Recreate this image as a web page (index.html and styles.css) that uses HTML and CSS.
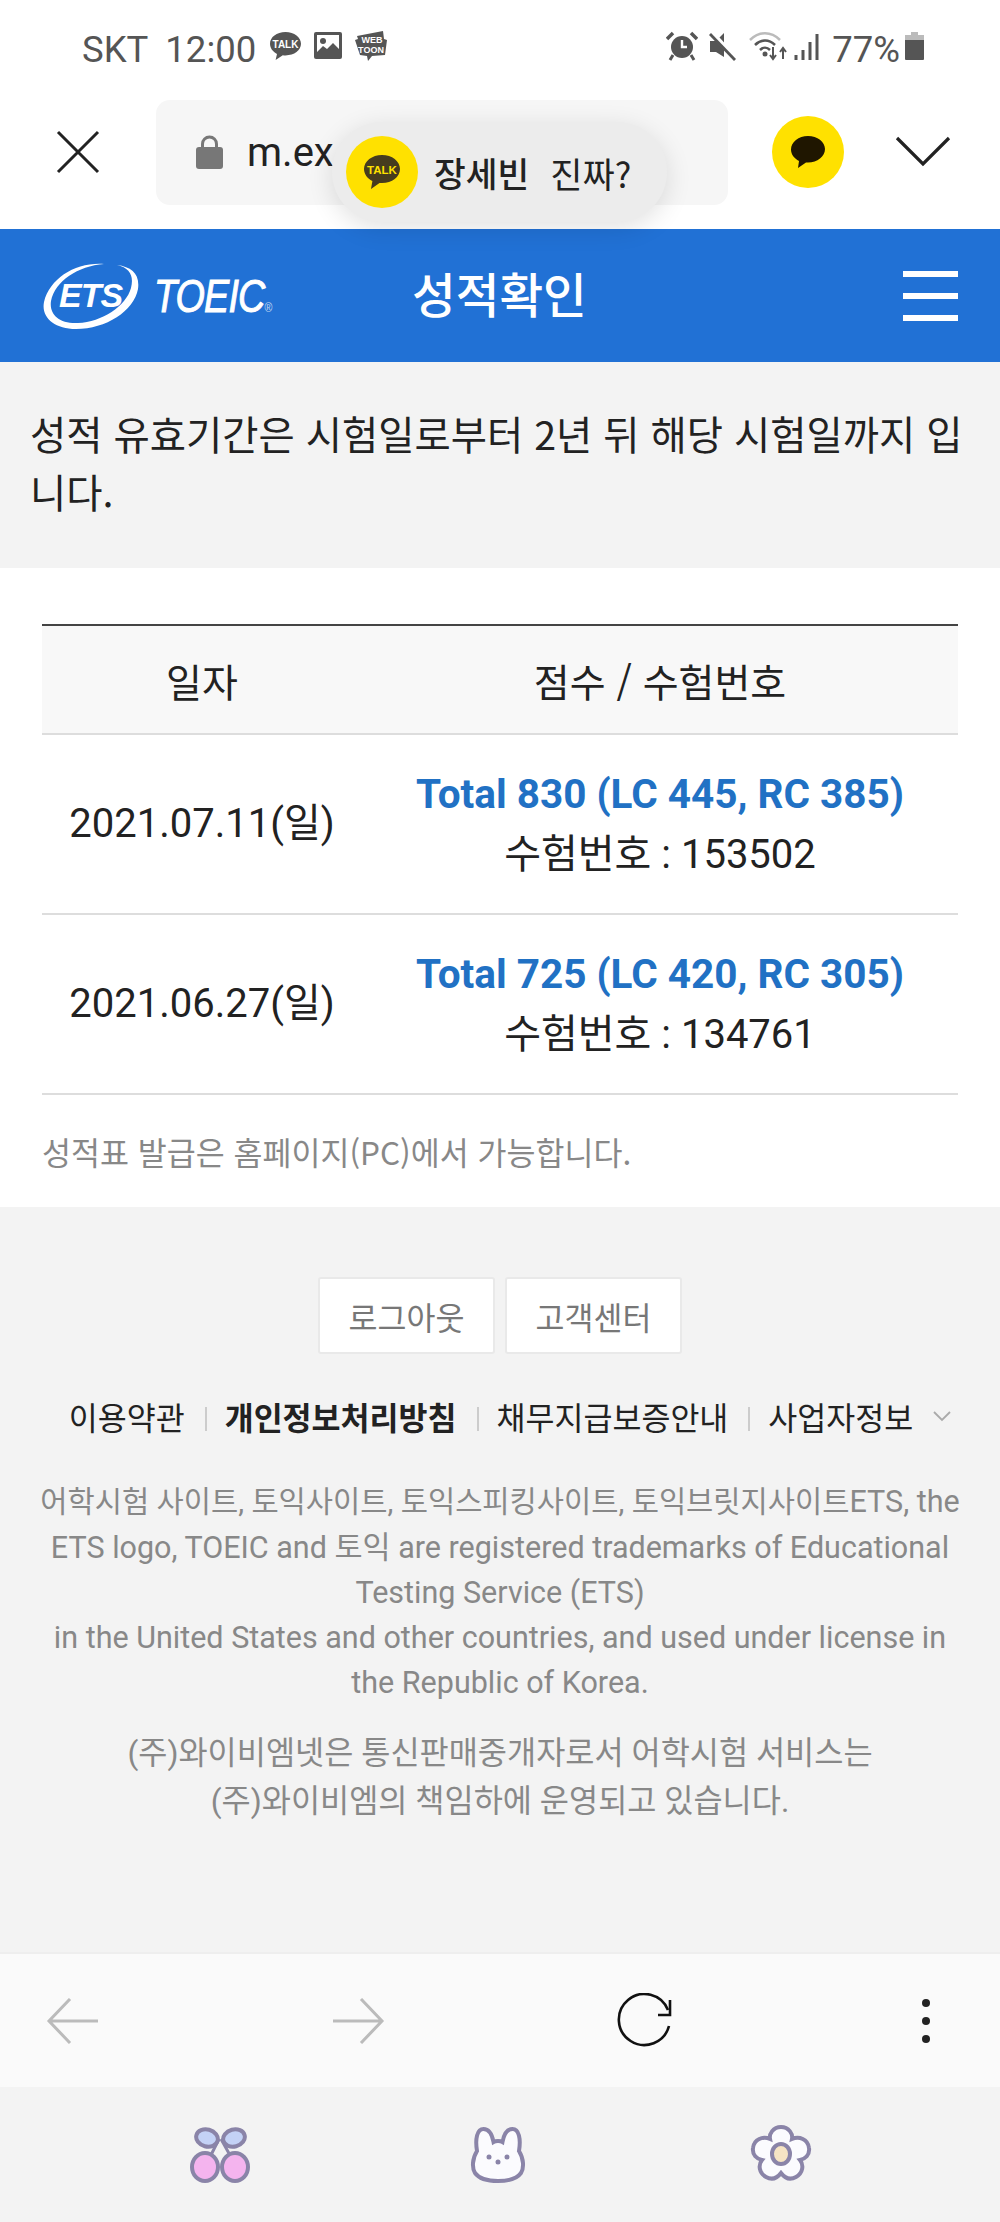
FILE: index.html
```html
<!DOCTYPE html>
<html lang="ko">
  <head>
    <meta charset="UTF-8" />
    <meta name="viewport" content="width=device-width, initial-scale=1.0" />
    <title>성적확인</title>
    <link rel="stylesheet" href="styles.css">
  </head>
  <body>
    <div class="statusbar">
      <div class="status-left">
        <span class="carrier">SKT</span>
        <span class="clock">12:00</span>
        <svg class="ico-talk" width="33" height="30" viewBox="0 0 33 30">
          <path d="M16.5 1C7.7 1 1 6.100 1 12.800c0 4.300 2.800 8 7 10.100L6.600 29l7.200-4.800c.9.100 1.800.2 2.700.2 8.800 0 15.500-5.100 15.500-11.600S25.300 1 16.500 1z" fill="#555"/>
          <text x="16.500" y="17" class="talk-text">TALK</text>
        </svg>
        <svg class="ico-pic" width="28" height="28" viewBox="0 0 28 28">
          <rect width="28" height="27" rx="2" fill="#555"/>
          <rect x="3" y="3" width="22" height="20" fill="#fff"/>
          <circle cx="9" cy="9" r="3" fill="#555"/>
          <path d="M3 20l6-6 4 3 6-6 6 6v6H3z" fill="#555"/>
        </svg>
        <svg class="ico-webtoon" width="34" height="32" viewBox="0 0 34 32">
          <path d="M3 6l26-5 1 8 3 1-2 15-13 1-4 5-1-5-7-1-5-15 3-1z" fill="#555"/>
          <text x="18" y="13" class="toon-text">WEB</text>
          <text x="17" y="23" class="toon-text">TOON</text>
        </svg>
      </div>
      <div class="status-right">
        <svg width="32" height="30" viewBox="0 0 32 30">
          <circle cx="16" cy="16" r="11" fill="#555"/>
          <path d="M16 9v7h5" fill="none" stroke="#fff" stroke-width="2.400"/>
          <path d="M1 8l6-6M31 8l-6-6" stroke="#555" stroke-width="3.500"/>
          <path d="M7 24l-3 5M25 24l3 5" stroke="#555" stroke-width="3"/>
        </svg>
        <svg class="ico-mute" width="28" height="30" viewBox="0 0 28 30">
          <path d="M1 10h6l8-8v24l-8-5H1z" fill="#555"/>
          <path d="M2 1l24 26" stroke="#fff" stroke-width="5"/>
          <path d="M1 3l25 26" stroke="#555" stroke-width="2.800"/>
        </svg>
        <svg class="ico-wifi" width="38" height="30" viewBox="0 0 38 30">
          <path d="M1 9c9-9 21-9 30 0" fill="none" stroke="#bbb" stroke-width="2.500"/>
          <path d="M6 14c6-6 14-6 20 0M11 19c3-3 7-3 10 0" fill="none" stroke="#555" stroke-width="2.500"/>
          <circle cx="16" cy="23" r="2.500" fill="#555"/>
          <path d="M24 16v11M21 24l3 4 3-4M34 28V18M31 21l3-4 3 4" fill="none" stroke="#555" stroke-width="2"/>
        </svg>
        <svg class="ico-signal" width="26" height="30" viewBox="0 0 26 30">
          <path d="M2 24v5M9 19v10M16 11v18M23 3v26" stroke="#555" stroke-width="3"/>
        </svg>
        <span class="battery-text">77%</span>
        <svg class="ico-batt" width="19" height="30" viewBox="0 0 19 30">
          <path d="M6 1h7v3h6v5H0V4h6z" fill="#bbb"/>
          <path d="M0 9h19v19a1 1 0 0 1-1 1H1a1 1 0 0 1-1-1z" fill="#555"/>
        </svg>
      </div>
    </div>

    <div class="browserbar">
      <svg class="ico-close" width="44" height="44" viewBox="0 0 44 44">
        <path d="M2 2l40 40M42 2L2 42" stroke="#222" stroke-width="3"/>
      </svg>
      <div class="urlbox">
        <svg width="27" height="34" viewBox="0 0 27 34">
          <path d="M6.500 14V9a7 7 0 0 1 14 0v5" fill="none" stroke="#777" stroke-width="3"/>
          <rect y="12" width="27" height="22" rx="3" fill="#777"/>
        </svg>
        <span class="urltext">m.ex</span>
      </div>
      <div class="kakao-btn">
        <svg width="34" height="34" viewBox="0 0 34 34">
          <path d="M17 1C7.600 1 0 7 0 14.500c0 5 3.300 9 8 11.500l-1 7 8-5.500c.7.100 1.300.1 2 .1 9.400 0 17-6 17-13.500S26.400 1 17 1z" fill="#1f1600"/>
        </svg>
      </div>
      <svg class="ico-chevron" width="56" height="32" viewBox="0 0 56 32">
        <path d="M2 2l26 26L54 2" fill="none" stroke="#222" stroke-width="3.200"/>
      </svg>
    </div>

    <div class="toast">
      <div class="toast-badge">
        <svg width="38" height="36" viewBox="0 0 38 36">
          <path d="M19 1C9 1 1 7.300 1 15c0 5 3.300 9.400 8.400 12L8 35l8.500-6c.8.100 1.700.1 2.500.1 10 0 18-6.300 18-14.100S29 1 19 1z" fill="#463c1e"/>
          <text x="19" y="20" class="toast-talk">TALK</text>
        </svg>
      </div>
      <span class="toast-name">장세빈</span>
      <span class="toast-msg">진짜?</span>
    </div>

    <header class="topbar">
      <div class="logo">
        <svg class="logo-ring" width="100" height="72" viewBox="0 0 100 72">
          <path d="M62 4C34 2 8 18 2 42c-3 15 10 27 32 27 30 0 58-18 62-40C98 14 90 7 75 5c13 3 17 11 14 23C84 46 60 62 36 63 17 64 7 54 9 41 13 21 36 6 62 4z" fill="#fff"/>
        </svg>
        <span class="logo-ets">ETS</span>
        <span class="logo-toeic">TOEIC<small>®</small></span>
      </div>
      <h1 class="page-title">성적확인</h1>
      <div class="hamburger"><i></i><i></i><i></i></div>
    </header>

    <p class="notice">성적 유효기간은 시험일로부터 2년 뒤 해당 시험일까지 입니다.</p>

    <main class="content">
      <table class="score-table">
        <thead>
          <tr><th class="col-date">일자</th><th>점수 / 수험번호</th></tr>
        </thead>
        <tbody>
          <tr>
            <td>2021.07.11(일)</td>
            <td><a class="score">Total 830 (LC 445, RC 385)</a><br />수험번호 : 153502</td>
          </tr>
          <tr>
            <td>2021.06.27(일)</td>
            <td><a class="score">Total 725 (LC 420, RC 305)</a><br />수험번호 : 134761</td>
          </tr>
        </tbody>
      </table>
      <p class="table-note">성적표 발급은 홈페이지(PC)에서 가능합니다.</p>
    </main>

    <footer class="footer">
      <div class="footer-buttons">
        <button>로그아웃</button>
        <button>고객센터</button>
      </div>
      <ul class="footer-links">
        <li>이용약관</li>
        <li class="strong">개인정보처리방침</li>
        <li>채무지급보증안내</li>
        <li class="last">사업자정보<svg class="ico-down" width="18" height="11" viewBox="0 0 18 11"><path d="M1 1l8 8 8-8" fill="none" stroke="#aaa" stroke-width="1.800"/></svg></li>
      </ul>
      <p class="legal"><span class="ko-tight">어학시험 사이트, 토익사이트, 토익스피킹사이트, 토익브릿지사이트</span>ETS, the<br />ETS logo, TOEIC and 토익 are registered trademarks of Educational<br />Testing Service (ETS)<br />in the United States and other countries, and used under license in<br />the Republic of Korea.</p>
      <p class="legal legal-ko">(주)와이비엠넷은 통신판매중개자로서 어학시험 서비스는<br />(주)와이비엠의 책임하에 운영되고 있습니다.</p>
    </footer>

    <div class="toolbar">
      <svg class="tool-back" width="54" height="46" viewBox="0 0 54 46"><path d="M52 23H3M24 1L3 23l21 22" fill="none" stroke="#bbb" stroke-width="3"/></svg>
      <svg class="tool-next" width="54" height="46" viewBox="0 0 54 46"><path d="M2 23h49M30 1l21 22-21 22" fill="none" stroke="#bbb" stroke-width="3"/></svg>
      <svg class="tool-reload" width="56" height="56" viewBox="0 0 56 56"><path d="M52 33A25.500 25.500 0 1 1 51 17" fill="none" stroke="#111" stroke-width="2.600"/><path d="M53 7V22H41" fill="none" stroke="#111" stroke-width="2.600"/></svg>
      <svg class="tool-more" width="10" height="46" viewBox="0 0 10 46"><circle cx="5" cy="5" r="4" fill="#222"/><circle cx="5" cy="23" r="4" fill="#222"/><circle cx="5" cy="41" r="4" fill="#222"/></svg>
    </div>

    <nav class="navbar">
      <svg width="60" height="56" viewBox="0 0 60 56">
        <path d="M29 12L20 30M31 12l10 18" stroke="#8a84a8" stroke-width="3"/>
        <ellipse cx="17" cy="11" rx="11" ry="8.500" fill="#c4d2f6" stroke="#8a84a8" stroke-width="4" transform="rotate(15 17 11)"/>
        <ellipse cx="44" cy="11" rx="11" ry="8.500" fill="#c4d2f6" stroke="#8a84a8" stroke-width="4" transform="rotate(-15 44 11)"/>
        <ellipse cx="15" cy="40" rx="13" ry="14" fill="#f4b4ee" stroke="#8a84a8" stroke-width="4"/>
        <ellipse cx="45" cy="40" rx="13" ry="14" fill="#f4b4ee" stroke="#8a84a8" stroke-width="4"/>
      </svg>
      <svg width="60" height="56" viewBox="0 0 60 56">
        <path d="M28 14C26.500 14 25 14 23.500 15C22 7 19 2 13.500 2C7 2 5 12 7 24C2 32 2 41 5 46C10 53 19 54 28 54C37 54 46 53 51 46C54 41 54 32 49 24C51 12 49 2 42.500 2C37 2 34 7 32.500 15C31 14 29.500 14 28 14Z" fill="#fbfbfe" stroke="#8a84a8" stroke-width="4"/>
        <circle cx="19" cy="30" r="2.500" fill="#8a84a8"/><circle cx="37" cy="30" r="2.500" fill="#8a84a8"/><circle cx="28" cy="35" r="2.500" fill="#8a84a8"/>
      </svg>
      <svg width="62" height="60" viewBox="0 0 62 60">
        <path d="M31 2c8 0 12 7 11 12 7-3 16 0 17 9 1 7-4 11-9 12 4 5 3 13-4 17-7 4-12 0-15-4-3 4-8 8-15 4-7-4-8-12-4-17-5-1-10-5-9-12 1-9 10-12 17-9-1-5 3-12 11-12z" fill="#fbfbfe" stroke="#8a84a8" stroke-width="4"/>
        <ellipse cx="31" cy="29" rx="9" ry="10" fill="#f6e4c4" stroke="#8a84a8" stroke-width="4"/>
      </svg>
    </nav>
  </body>
</html>
```

FILE: styles.css
```css
* {
  box-sizing: border-box;
}
html,
body {
  margin: 0;
  padding: 0;
}
body {
  width: 1000px;
  height: 2222px;
  overflow: hidden;
  position: relative;
  background: #fff;
  font-family: "Noto Sans CJK KR", "Noto Sans", sans-serif;
  color: #222;
}
svg {
  display: block;
  flex: none;
}

/* phone status bar */
.statusbar {
  height: 92px;
  display: flex;
  justify-content: space-between;
  align-items: center;
  padding: 0 76px 0 82px;
  font-family: Roboto, sans-serif;
  font-size: 36.500px;
  color: #555;
}
.status-left,
.status-right {
  display: flex;
  align-items: center;
}
.carrier {
  margin-right: 17px;
  padding-top: 6px;
}
.clock {
  margin-right: 13px;
  padding-top: 6px;
}
.ico-pic {
  margin-left: 12px;
}
.ico-webtoon {
  margin-left: 12px;
}
.talk-text,
.toast-talk {
  font-family: "Liberation Sans", sans-serif;
  font-weight: 700;
  text-anchor: middle;
}
.talk-text {
  font-size: 10px;
  fill: #fff;
}
.toon-text {
  font-family: "Liberation Sans", sans-serif;
  font-weight: 700;
  font-size: 9px;
  text-anchor: middle;
  fill: #fff;
}
.toast-talk {
  font-size: 11.500px;
  fill: #ffe100;
}
.status-right {
  gap: 11px;
}
.ico-wifi {
  margin-left: 1px;
}
.ico-signal {
  margin-left: -4px;
}
.battery-text {
  margin-left: 1px;
  margin-right: -6px;
  padding-top: 6px;
}

/* browser bar */
.browserbar {
  height: 137px;
  display: flex;
  align-items: center;
  padding: 0 28px 17px 56px;
}
.urlbox {
  width: 572px;
  height: 105px;
  margin-left: 56px;
  padding-left: 40px;
  display: flex;
  align-items: center;
  gap: 24px;
  background: #f6f6f6;
  border-radius: 14px;
}
.urltext {
  font-family: Roboto, sans-serif;
  font-size: 40px;
  color: #222;
}
.kakao-btn {
  width: 72px;
  height: 72px;
  margin-left: 44px;
  border-radius: 50%;
  background: #ffe100;
  display: flex;
  align-items: center;
  justify-content: center;
}
.ico-chevron {
  margin-left: 51px;
}

/* kakao popup */
.toast {
  position: absolute;
  left: 332px;
  top: 122px;
  width: 335px;
  height: 100px;
  padding-left: 14px;
  display: flex;
  align-items: center;
  background: #ececec;
  border-radius: 50px;
  box-shadow: 0 6px 26px rgba(0, 0, 0, 0.12);
  z-index: 2;
}
.toast-badge {
  width: 72px;
  height: 72px;
  border-radius: 50%;
  background: #ffe100;
  display: flex;
  align-items: center;
  justify-content: center;
}
.toast-name {
  margin-left: 16px;
  font-size: 34.500px;
  font-weight: 500;
}
.toast-msg {
  margin-left: 21px;
  font-size: 35px;
}

/* blue header */
.topbar {
  height: 133px;
  background: #2171d5;
  color: #fff;
  display: flex;
  align-items: center;
  position: relative;
  padding: 0 42px 0 42px;
}
.logo {
  width: 230px;
  height: 72px;
  display: flex;
  align-items: center;
  position: relative;
  font-family: "Liberation Sans", sans-serif;
  font-style: italic;
  font-weight: 700;
}
.logo-ring {
  position: absolute;
  left: 0;
  top: 0;
}
.logo-ets {
  margin-left: 17px;
  font-size: 34px;
  letter-spacing: -1px;
}
.logo-toeic {
  margin-left: 32px;
  font-size: 46px;
  font-weight: 400;
  letter-spacing: -1px;
  -webkit-text-stroke: 1px #fff;
  transform: scaleX(0.82);
  transform-origin: left center;
}
.logo-toeic small {
  font-size: 13px;
  font-style: normal;
  -webkit-text-stroke: 0;
  opacity: 0.7;
}
.page-title {
  margin: 0 0 5px 140px;
  font-size: 47.500px;
  font-weight: 500;
  line-height: 1;
}
.hamburger {
  margin-left: auto;
  display: flex;
  flex-direction: column;
  gap: 16px;
}
.hamburger i {
  display: block;
  width: 55px;
  height: 6px;
  background: #fff;
}

/* notice */
.notice {
  margin: 0;
  height: 206px;
  padding: 42px 28px 0 30px;
  background: #f3f3f3;
  font-size: 39.400px;
  line-height: 58px;
  color: #222;
}

/* score table */
.content {
  height: 639px;
  padding: 56px 42px 0;
}
.score-table {
  width: 916px;
  border-collapse: collapse;
  border-top: 2px solid #444;
  font-size: 40px;
  text-align: center;
  table-layout: fixed;
}
.score-table th {
  height: 109px;
  background: #f8f8f8;
  border-bottom: 2px solid #ddd;
  font-size: 39px;
  font-weight: 400;
}
.col-date {
  width: 320px;
}
.score-table td {
  height: 180px;
  border-bottom: 2px solid #ddd;
  line-height: 60px;
  font-family: Roboto, "Noto Sans CJK KR", sans-serif;
}
.score {
  color: #2171c4;
  font-weight: 700;
  font-size: 40.500px;
}
.table-note {
  margin: 34px 0 0;
  font-size: 31.500px;
  line-height: 44px;
  color: #888;
}

/* footer */
.footer {
  height: 745px;
  padding-top: 70px;
  background: #f3f3f3;
  text-align: center;
}
.footer-buttons {
  display: flex;
  justify-content: center;
  gap: 10px;
}
.footer-buttons button {
  width: 177px;
  height: 77px;
  padding: 0;
  background: #fff;
  border: 2px solid #e9e9e9;
  border-radius: 3px;
  font-family: inherit;
  font-size: 31.500px;
  color: #777;
}
.footer-links {
  margin: 39px 0 0;
  padding: 0;
  list-style: none;
  display: flex;
  justify-content: center;
  font-size: 31.500px;
  line-height: 46px;
  color: #222;
}
.footer-links li {
  display: flex;
  align-items: center;
  padding: 0 20px;
  position: relative;
}
.footer-links li + li::before {
  content: "";
  position: absolute;
  left: 0;
  top: 14px;
  width: 2px;
  height: 24px;
  background: #ccc;
}
.footer-links .last {
  padding-right: 0;
}
.footer-links .strong {
  font-weight: 700;
}
.ico-down {
  margin-left: 20px;
}
.legal {
  margin: 40px 0 0;
  font-family: Roboto, "Noto Sans CJK KR", sans-serif;
  font-size: 30.500px;
  line-height: 45px;
  color: #888;
}
.ko-tight {
  font-size: 29.600px;
}
.legal-ko {
  margin-top: 25px;
  font-size: 31.700px;
  line-height: 48px;
}

/* bottom toolbar */
.toolbar {
  height: 135px;
  background: #fafafa;
  border-top: 2px solid #eee;
  display: flex;
  align-items: center;
  padding: 0 0 0 46px;
}
.tool-next {
  margin-left: 231px;
}
.tool-reload {
  margin-left: 232px;
}
.tool-more {
  margin-left: 248px;
}
.navbar {
  height: 135px;
  background: #f3f3f3;
  display: flex;
  align-items: center;
  gap: 220px;
  padding-left: 190px;
}
```
